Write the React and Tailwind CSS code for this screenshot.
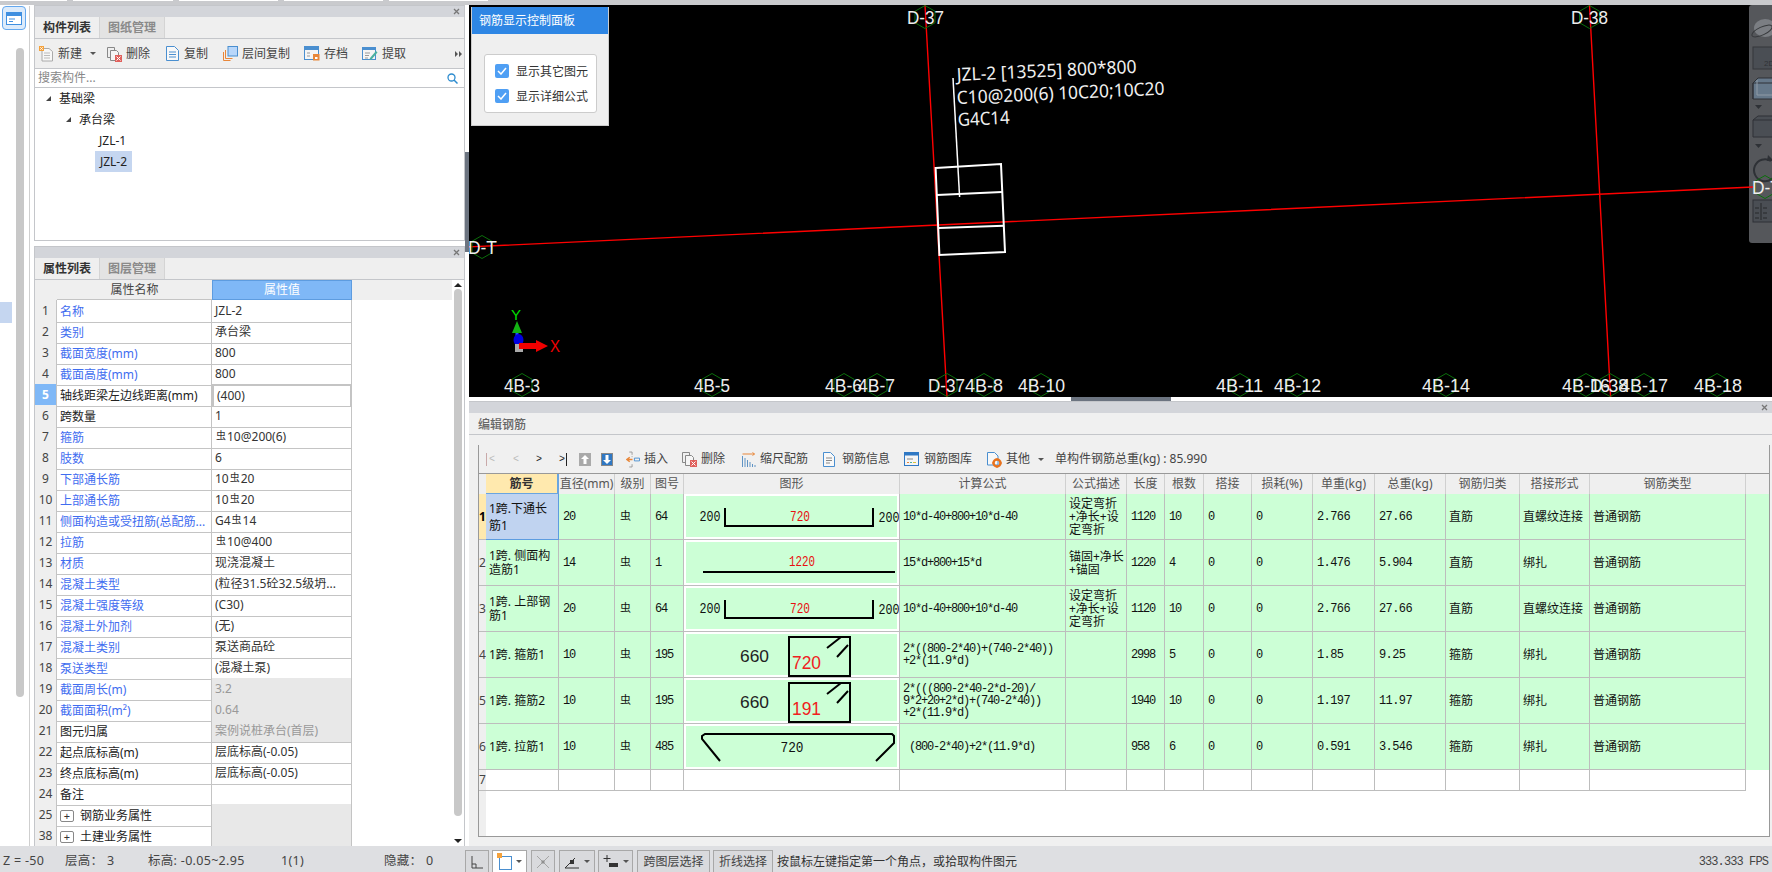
import React from "react"

const SANS = "font-['Noto_Sans','Noto_Sans_CJK_SC',sans-serif]"
const MONO = "font-['Liberation_Mono','Noto_Sans_CJK_SC',monospace]"
const BAR_COLS = "grid grid-cols-[7px_73px_56px_36px_33px_216px_166px_61px_38px_39px_48px_61px_62px_71px_74px_70px_156px]"

const props = [
  ["1", "名称", "JZL-2", "b"],
  ["2", "类别", "承台梁", "b"],
  ["3", "截面宽度(mm)", "800", "b"],
  ["4", "截面高度(mm)", "800", "b"],
  ["5", "轴线距梁左边线距离(mm)", "(400)", "active"],
  ["6", "跨数量", "1", ""],
  ["7", "箍筋", ["", "10@200(6)"], "b"],
  ["8", "肢数", "6", "b"],
  ["9", "下部通长筋", ["10", "20"], "b"],
  ["10", "上部通长筋", ["10", "20"], "b"],
  ["11", "侧面构造或受扭筋(总配筋...", ["G4", "14"], "b"],
  ["12", "拉筋", ["", "10@400"], "b"],
  ["13", "材质", "现浇混凝土", "b"],
  ["14", "混凝土类型", "(粒径31.5砼32.5级坍...", "b"],
  ["15", "混凝土强度等级", "(C30)", "b"],
  ["16", "混凝土外加剂", "(无)", "b"],
  ["17", "混凝土类别", "泵送商品砼", "b"],
  ["18", "泵送类型", "(混凝土泵)", "b"],
  ["19", "截面周长(m)", "3.2", "b dis"],
  ["20", "截面面积(m²)", "0.64", "b dis"],
  ["21", "图元归属", "案例说桩承台(首层)", "dis"],
  ["22", "起点底标高(m)", "层底标高(-0.05)", ""],
  ["23", "终点底标高(m)", "层底标高(-0.05)", ""],
  ["24", "备注", "", ""],
  ["25", "钢筋业务属性", "", "group"],
  ["38", "土建业务属性", "", "group"],
]

const bars = [
  { n: "1", name: ["1跨.下通长", "筋1"], d: "20", no: "64", fig: "hook", formula: ["10*d-40+800+10*d-40"], desc: ["设定弯折", "+净长+设", "定弯折"], len: "1120", cnt: "10", unit: "2.766", tot: "27.66", cat: "直筋", lap: "直螺纹连接" },
  { n: "2", name: ["1跨. 侧面构", "造筋1"], d: "14", no: "1", fig: "line", formula: ["15*d+800+15*d"], desc: ["锚固+净长", "+锚固"], len: "1220", cnt: "4", unit: "1.476", tot: "5.904", cat: "直筋", lap: "绑扎" },
  { n: "3", name: ["1跨. 上部钢", "筋1"], d: "20", no: "64", fig: "hook", formula: ["10*d-40+800+10*d-40"], desc: ["设定弯折", "+净长+设", "定弯折"], len: "1120", cnt: "10", unit: "2.766", tot: "27.66", cat: "直筋", lap: "直螺纹连接" },
  { n: "4", name: ["1跨. 箍筋1"], d: "10", no: "195", fig: "s720", formula: ["2*((800-2*40)+(740-2*40))", "+2*(11.9*d)"], desc: [], len: "2998", cnt: "5", unit: "1.85", tot: "9.25", cat: "箍筋", lap: "绑扎" },
  { n: "5", name: ["1跨. 箍筋2"], d: "10", no: "195", fig: "s191", formula: ["2*(((800-2*40-2*d-20)/", "9*2+20+2*d)+(740-2*40))", "+2*(11.9*d)"], desc: [], len: "1940", cnt: "10", unit: "1.197", tot: "11.97", cat: "箍筋", lap: "绑扎" },
  { n: "6", name: ["1跨. 拉筋1"], d: "10", no: "485", fig: "tie", formula: [" (800-2*40)+2*(11.9*d)"], desc: [], len: "958", cnt: "6", unit: "0.591", tot: "3.546", cat: "箍筋", lap: "绑扎" },
]

const barHeads = ["直径(mm)", "级别", "图号", "图形", "计算公式", "公式描述", "长度", "根数", "搭接", "损耗(%)", "单重(kg)", "总重(kg)", "钢筋归类", "搭接形式", "钢筋类型"]

const topLabels = [
  ["D-37", 925, 17],
  ["D-38", 1589.5, 17],
  ["D-T", 482, 247],
  ["D-T2", 1765, 187],
]
const bottomLabels = [
  ["4B-3", 522, 504, 36], ["4B-5", 712, 694, 36], ["4B-6", 844, 825, 37], ["4B-7", 877, 858, 37],
  ["D-37", 947, 928, 37], ["4B-8", 984, 965, 38], ["4B-10", 1041, 1018, 47], ["4B-11", 1240, 1216, 47],
  ["4B-12", 1297, 1274, 47], ["4B-14", 1446, 1422, 48], ["4B-16", 1586, 1562, 48], ["D-38", 1610, 1590, 38],
  ["4B-17", 1644, 1620, 48], ["4B-18", 1717, 1694, 48],
]

function hex(cx, cy) {
  const rx = 10, ry = 11.5
  return `${cx},${cy - ry} ${cx + rx},${cy - ry / 2} ${cx + rx},${cy + ry / 2} ${cx},${cy + ry} ${cx - rx},${cy + ry / 2} ${cx - rx},${cy - ry / 2}`
}

function Caret({ className = "" }) {
  return <span className={`inline-block h-0 w-0 border-x-[3px] border-t-[3px] border-x-transparent border-t-[#555] ${className}`} />
}

function NewIcon() {
  return (
    <svg width="15" height="16" viewBox="0 0 15 16">
      <path d="M3 2.5h7l3.5 3v9.5h-10.5z" fill="#f7f7f7" stroke="#aaa" />
      <path d="M5 7h6M5 9.5h6M5 12h6" stroke="#bbb" />
      <rect x="0" y="0" width="5" height="5" fill="#f5a23c" />
      <path d="M1 1l3 3M4 1l-3 3" stroke="#fff" strokeWidth=".7" />
    </svg>
  )
}
function DeleteIcon() {
  return (
    <svg width="15" height="16" viewBox="0 0 15 16">
      <path d="M.5 1.5h7v10h-7z" fill="none" stroke="#888" />
      <path d="M3.5 4.5h6l2 2v8h-8z" fill="#f5f5f5" stroke="#888" />
      <rect x="8" y="9" width="7" height="7" fill="#e0605c" />
      <path d="M9.5 10.5l4 4M13.5 10.5l-4 4" stroke="#fff" />
    </svg>
  )
}
function CopyIcon() {
  return (
    <svg width="13" height="15" viewBox="0 0 13 15" className="mr-[1px]">
      <path d="M.5.5h8l4 4v10h-12z" fill="#f8f8f8" stroke="#4a8fd0" />
      <path d="M3 6h7M3 8.5h7M3 11h7" stroke="#4a8fd0" />
    </svg>
  )
}
function FloorCopyIcon() {
  return (
    <svg width="15" height="15" viewBox="0 0 15 15">
      <path d="M.5 6v8.500h7M2.500 4v8.500h7" fill="none" stroke="#e8873a" />
      <rect x="5" y=".5" width="9.500" height="9.500" fill="#b9d7fa" stroke="#4a8fd0" />
    </svg>
  )
}
function SaveIcon() {
  return (
    <svg width="16" height="15" viewBox="0 0 16 15">
      <rect x=".5" y=".5" width="14" height="13" fill="#f5f5f5" stroke="#4a8fd0" />
      <rect x="0" y="0" width="15" height="4" fill="#4a8fd0" />
      <path d="M3 7h3M3 10h3" stroke="#999" />
      <rect x="9" y="8" width="6.500" height="6.500" fill="#e8873a" />
      <rect x="11" y="11" width="2.500" height="2" fill="#fff" />
    </svg>
  )
}
function ExtractIcon() {
  return (
    <svg width="16" height="15" viewBox="0 0 16 15">
      <rect x=".5" y="1.500" width="13" height="12" fill="#f5f5f5" stroke="#4a8fd0" />
      <rect x="0" y="1" width="14" height="3" fill="#4a8fd0" />
      <path d="M3 7h5M3 9.500h4M3 12h3" stroke="#999" />
      <path d="M8 12l6-7 1.500 1.500-6 7-2 .5z" fill="#4ab0a0" />
    </svg>
  )
}
function InsertIcon() {
  return (
    <svg width="14" height="17" viewBox="0 0 15 17">
      <path d="M3.500.5h3v3M6.500 13.500v3h-3M6.500 6v-1" fill="none" stroke="#999" />
      <path d="M7 8.500H2M4 6l-3 2.500L4 11" fill="none" stroke="#e8873a" strokeWidth="1.500" />
      <path d="M9 7h5.500v3H9z" fill="none" stroke="#4a8fd0" />
    </svg>
  )
}
function ScaleIcon() {
  return (
    <svg width="14" height="15" viewBox="0 0 14 15">
      <path d="M.5 2h12M10.500.5l2 1.500-2 1.500" fill="none" stroke="#e8873a" />
      <path d="M.5 4v11M3 6v9M5.500 8v7M8 10v5M10.500 12v3M13 13v2" stroke="#5f93c4" />
    </svg>
  )
}
function InfoIcon() {
  return (
    <svg width="12" height="15" viewBox="0 0 12 15" className="mr-[3px]">
      <path d="M.5.5h7l4 4v10H.5z" fill="#f8f8f8" stroke="#4a8fd0" />
      <path d="M3 6h6M3 8.500h6M3 11h4" stroke="#888" />
    </svg>
  )
}
function LibraryIcon() {
  return (
    <svg width="15" height="14" viewBox="0 0 15 14" className="mr-[1px]">
      <rect x=".5" y=".5" width="14" height="13" fill="#f5f5f5" stroke="#2f78c4" />
      <rect x="0" y="0" width="15" height="3.500" fill="#2f78c4" />
      <path d="M3 7h6" stroke="#888" />
      <path d="M3 10.500h2" stroke="#e8873a" /><path d="M6 10.500h2" stroke="#4ab0a0" /><path d="M9 10.500h3" stroke="#d9c23c" />
    </svg>
  )
}
function OtherIcon() {
  return (
    <svg width="15" height="17" viewBox="0 0 15 17">
      <path d="M.5 1.500h7l3.500 3.500v9H.5z" fill="#f8f8f8" stroke="#4a8fd0" />
      <circle cx="10" cy="12" r="3.500" fill="none" stroke="#e8731e" strokeWidth="2.400" />
      <path d="M10 7v1.500M10 15.500v1.500M5 12h1.500M13.500 12H15" stroke="#e8731e" />
    </svg>
  )
}

function ToolItem({ icon, label, className = "" }) {
  return (
    <div className={`flex items-center gap-[4px] ${className}`}>
      {icon}
      <span className="whitespace-nowrap text-[12px] text-[#444]">{label}</span>
    </div>
  )
}

function TitleBar() {
  return (
    <div className="flex h-[12px] shrink-0 items-center justify-end border-t border-[#c4c6ca] bg-[#d3d5da] pr-[4px]">
      <svg width="7" height="7" viewBox="0 0 7 7"><path d="M1 1l5 5M6 1l-5 5" stroke="#777" strokeWidth="1.300" /></svg>
    </div>
  )
}

function PanelTabs({ active, other }) {
  return (
    <div className="flex h-[22px] shrink-0 border-b border-[#c4c6ca] bg-[#efefef] text-[12px]">
      <div className="flex w-[65px] items-center justify-center border-r border-[#d4d4d4] font-semibold text-[#333]">{active}</div>
      <div className="flex w-[65px] items-center justify-center border-r border-[#d4d4d4] bg-[#e3e3e3] font-semibold text-[#8a8a8a]">{other}</div>
    </div>
  )
}

function Rebar() {
  return <span className="relative top-[-2px] mx-[1px] text-[10px] leading-none">虫</span>
}

function PropRow({ row }) {
  const [num, name, value, flags] = row
  const active = flags === "active"
  const group = flags === "group"
  const dis = flags.includes("dis")
  const blue = flags.includes("b")
  return (
    <div className="grid h-[21px] grid-cols-[22px_155px_140px] text-[12px] leading-[22px]">
      <div className={`border-r border-b border-[#c4c4c4] text-center ${active ? "bg-[#7fb8f7] font-bold text-white" : "bg-[#efefef] text-[#444]"}`}>{num}</div>
      <div className={`flex items-center overflow-hidden border-r border-b border-[#c4c4c4] pt-[1px] pl-[3px] whitespace-nowrap ${blue ? "text-[#3f6df0]" : "text-[#222]"}`}>
        {group && <span className="mr-[6px] flex h-[12px] w-[14px] items-center justify-center rounded-[2px] border border-[#888] text-[11px] leading-none text-[#333]">+</span>}
        {name}
      </div>
      <div className={`overflow-hidden border-b border-[#c4c4c4] pl-[3px] whitespace-nowrap ${active ? "border-2 border-[#808080] bg-white pl-[2px] leading-[19px] text-[#333]" : "border-r"} ${dis || group ? "bg-[#e8e8e8]" : ""} ${dis ? "text-[#999]" : "text-[#333]"}`}>
        {Array.isArray(value) ? <>{value[0]}<Rebar />{value[1]}</> : value}
      </div>
    </div>
  )
}

function Figure({ type }) {
  const mono = "Liberation Mono, monospace"
  const sans = "Liberation Sans, sans-serif"
  const text = (x, y, t, w, fill = "#111") => (
    <text x={x - w / 2} y={y} fill={fill} fontSize="14" fontFamily={mono} dominantBaseline="central" textLength={w} lengthAdjust="spacingAndGlyphs">{t}</text>
  )
  return (
    <svg width="216" height="45" viewBox="0 0 216 45" className="block">
      {type === "hook" && <>
        {text(26, 23, "200", 21)}
        <path d="M41 14v18h148v-18" fill="none" stroke="#000" strokeWidth="2" />
        {text(116, 23, "720", 20, "#e81010")}
        {text(205, 24, "200", 21)}
      </>}
      {type === "line" && <>
        {text(118, 22, "1220", 26, "#e81010")}
        <path d="M19 32h192" stroke="#000" strokeWidth="2" />
      </>}
      {(type === "s720" || type === "s191") && <>
        <text x="56" y="24" fill="#222" fontSize="17" fontFamily={sans} dominantBaseline="central" textLength="29" lengthAdjust="spacingAndGlyphs">660</text>
        <rect x="105" y="5" width="61" height="39" fill="none" stroke="#000" strokeWidth="2" />
        <path d="M143 16l14-11M153 25l11-12" stroke="#000" strokeWidth="2" />
        <text x="108" y="30" fill="#f02020" fontSize="19" fontFamily={sans} dominantBaseline="central" textLength="29" lengthAdjust="spacingAndGlyphs">{type === "s720" ? "720" : "191"}</text>
      </>}
      {type === "tie" && <>
        <path d="M36 37L18 15v-3l3-2h187l2 2v7L192 37" fill="none" stroke="#000" strokeWidth="2" />
        {text(108, 24, "720", 23)}
      </>}
    </svg>
  )
}

function Num({ children }) {
  return <div className={`flex items-center overflow-hidden border-r border-b border-[#bdbdbd] pl-[4px] ${MONO} text-[12px] tracking-[-1.2px] text-[#111]`}>{children}</div>
}
function Cjk({ children }) {
  return <div className="flex items-center overflow-hidden border-r border-b border-[#bdbdbd] pl-[3px] text-[12px] whitespace-nowrap text-[#111]">{children}</div>
}

function BarRow({ row, first }) {
  return (
    <div className={`${BAR_COLS} h-[46px] bg-[#ccffd6]`}>
      <div className={`flex items-center justify-center overflow-hidden border-b border-[#bdbdbd] text-[12px] ${first ? "bg-[#ffe9ae] font-bold text-black" : "bg-[#efefef] text-[#444]"}`}>{row.n}</div>
      <div className={`flex flex-col justify-center overflow-hidden border-r border-b pl-[3px] text-[12px] whitespace-nowrap text-[#111] ${first ? "border-[#5d9ce0] bg-[#c0d3f0] leading-[17px]" : "border-[#bdbdbd] leading-[14px]"}`}>
        {row.name.map(l => <div key={l}>{l}</div>)}
      </div>
      <Num>{row.d}</Num>
      <div className="flex items-center border-r border-b border-[#bdbdbd] pl-[5px] text-[11px] text-[#111]">虫</div>
      <Num>{row.no}</Num>
      <div className="border-r border-b border-[#bdbdbd]">
        <div className="h-full border-2 border-white"><div className="-mx-[2px] -my-[2px]"><Figure type={row.fig} /></div></div>
      </div>
      <div className={`flex flex-col justify-center overflow-hidden border-r border-b border-[#bdbdbd] pl-[3px] ${MONO} text-[12px] leading-[12px] tracking-[-1.2px] whitespace-pre text-[#111]`}>
        {row.formula.map(l => <div key={l}>{l}</div>)}
      </div>
      <div className="flex flex-col justify-center overflow-hidden border-r border-b border-[#bdbdbd] pl-[3px] text-[12px] leading-[13px] whitespace-nowrap text-[#111]">
        {row.desc.map(l => <div key={l}>{l}</div>)}
      </div>
      <Num>{row.len}</Num>
      <Num>{row.cnt}</Num>
      <Num>0</Num>
      <Num>0</Num>
      <Num><span className="tracking-[-0.6px]">{row.unit}</span></Num>
      <Num><span className="tracking-[-0.6px]">{row.tot}</span></Num>
      <Cjk>{row.cat}</Cjk>
      <Cjk>{row.lap}</Cjk>
      <Cjk>普通钢筋</Cjk>
    </div>
  )
}

function Viewport() {
  const label = (t, x, y, w, key) => (
    <text key={key} x={x} y={y} fill="#eee" fontSize="19" fontFamily="Liberation Sans, sans-serif" textLength={w} lengthAdjust="spacingAndGlyphs">{t}</text>
  )
  return (
    <svg viewBox="469 5 1303 392" className="absolute inset-0 h-full w-full">
      <path d="M925 5L947 397M1589.500 5L1610.600 397M467 247L1753 187" stroke="#ff0000" strokeWidth="1.400" fill="none" />
      <g fill="none" stroke="#0b6e0b">
        {topLabels.map(l => <polygon key={l[0]} points={hex(l[1], l[2])} />)}
        {bottomLabels.map(l => <polygon key={l[0]} points={hex(l[1], 385)} />)}
      </g>
      {label("D-37", 907, 24, 37, "a")}
      {label("D-38", 1571, 24, 37, "b")}
      {label("D-T", 468, 254, 29, "c")}
      {label("D-T", 1752, 194, 29, "d")}
      {bottomLabels.map(l => label(l[0], l[2], 392, l[3], l[0]))}

      <g fill="none" stroke="#fff" strokeWidth="2">
        <path d="M935.600 168L1001 164L1005 252L939.400 255Z" />
        <path d="M937 195L1002 192M938.500 228L1004 225.700" />
        <path d="M953 78L959.600 197" strokeWidth="1.500" />
      </g>
      <g fill="#f0f0f0" fontSize="18" fontFamily="Noto Sans, sans-serif">
        <text x="957" y="81" transform="rotate(-2.600 957 81)" textLength="180" lengthAdjust="spacingAndGlyphs">JZL-2 [13525] 800*800</text>
        <text x="957" y="104" transform="rotate(-2.600 957 104)" textLength="208" lengthAdjust="spacingAndGlyphs">C10@200(6) 10C20;10C20</text>
        <text x="958" y="126" transform="rotate(-2.600 958 126)" textLength="52" lengthAdjust="spacingAndGlyphs">G4C14</text>
      </g>

      <text x="511" y="320" fill="#00e000" fontSize="15" fontFamily="Liberation Sans, sans-serif">Y</text>
      <path d="M517 321l5 12h-10z" fill="#13b313" />
      <path d="M517 333v8" stroke="#2050ff" strokeWidth="3" />
      <ellipse cx="518.500" cy="340" rx="5" ry="6" fill="#0000e0" />
      <rect x="515" y="344" width="8" height="8" fill="#aaa" />
      <path d="M519 343h17v-3l12 6-12 6v-3h-17z" fill="#f00000" />
      <text x="550" y="352" fill="#f00000" fontSize="16" fontFamily="Liberation Sans, sans-serif" textLength="10" lengthAdjust="spacingAndGlyphs">X</text>
    </svg>
  )
}

function FloatingPanel() {
  return (
    <div className="absolute top-[2px] left-[2px] h-[119px] w-[138px] border-x border-b border-[#ccc] bg-[#efefef]">
      <div className="flex h-[27px] items-center bg-[#2e86e4] pl-[7px] text-[12px] text-white">钢筋显示控制面板</div>
      <div className="mx-[12px] mt-[20px] flex h-[59px] w-[113px] flex-col justify-center gap-[9px] rounded-[3px] border border-[#ccc] bg-white pl-[10px]">
        {["显示其它图元", "显示详细公式"].map(t => (
          <div key={t} className="flex items-center gap-[7px] text-[12px] leading-[14px] text-[#333]">
            <span className="flex h-[14px] w-[14px] items-center justify-center rounded-[2px] bg-[#4f9ff4]">
              <svg width="10" height="8" viewBox="0 0 10 8"><path d="M1 4l3 3 5-6" fill="none" stroke="#fff" strokeWidth="1.500" /></svg>
            </span>
            <span className="pt-[2px]">{t}</span>
          </div>
        ))}
      </div>
    </div>
  )
}

function SideTools() {
  return (
    <div className="absolute top-0 right-0 h-[238px] w-[23px] rounded-l-[3px] bg-[#55575b]">
      <svg width="23" height="238" viewBox="0 0 23 238" className="block">
        <ellipse cx="16" cy="23" rx="11" ry="9" fill="#7b7e83" />
        <ellipse cx="13" cy="26" rx="11" ry="4" fill="none" stroke="#36383b" transform="rotate(-25 13 26)" />
        <rect x="4" y="42" width="24" height="22" fill="#4a4e54" stroke="#34373b" />
        <text x="15" y="61" fill="#2f3236" fontSize="8" fontFamily="Liberation Sans, sans-serif">2D</text>
        <path d="M4 94V78l5-5h19M4 78h24v16H4z" fill="#66788a" stroke="#2e3136" />
        <path d="M8 90V75M8 90H28" stroke="#8f9aa6" fill="none" />
        <path d="M6 100h7l-3.500 4z" fill="#2e3136" />
        <path d="M4 132V115l5-4h19v21zM4 115h24" fill="#4a4e54" stroke="#2e3136" />
        <path d="M6 139h7l-3.500 4z" fill="#2e3136" />
        <path d="M22 156a11 11 0 1 0 5 10" fill="none" stroke="#2e3136" strokeWidth="2" />
        <path d="M19 150l6 6h-7z" fill="#2e3136" />
        <rect x="4" y="195" width="24" height="22" fill="#4a4e54" stroke="#2e3136" />
        <path d="M6 203h4M6 208h4M6 213h4M14 203h4M14 208h4M14 213h4M12 198v17" stroke="#26282b" />
      </svg>
    </div>
  )
}

function StatusButton({ className = "", children }) {
  return <div className={`flex h-[22px] items-center justify-center border border-b-0 border-[#a8a8a8] bg-[#d9dadd] ${className}`}>{children}</div>
}

function StatusBar() {
  return (
    <div className="flex h-[26px] shrink-0 items-end bg-[#dedfe2] text-[12px] text-[#444]">
      <div className="flex h-[26px] w-[465px] items-center pt-[5px] pl-[3px] text-[12.500px] tracking-[0.3px] whitespace-nowrap">
        <span className="w-[62px]">Z = -50</span>
        <span className="w-[83px]">层高： 3</span>
        <span className="w-[133px]">标高: -0.05~2.95</span>
        <span className="w-[103px]">1(1)</span>
        <span className="w-[81px]">隐藏： 0</span>
      </div>
      <div className="flex items-end gap-[3px]">
        <StatusButton className="w-[24px]">
          <svg width="14" height="14" viewBox="0 0 14 14"><path d="M2 1v12h11M2 9h4v4" fill="none" stroke="#444" /></svg>
        </StatusButton>
        <StatusButton className="w-[35px] justify-start gap-[4px] border-[#3d9bf0] bg-white pl-[4px]">
          <svg width="15" height="17" viewBox="0 0 15 17"><rect x="2.500" y="3.500" width="12" height="13" fill="none" stroke="#4a8fd0" /><rect x="0" y="0" width="5" height="5" fill="#f5a23c" /></svg>
          <Caret />
        </StatusButton>
        <StatusButton className="ml-[1px] w-[24px]">
          <svg width="14" height="14" viewBox="0 0 14 14"><path d="M1 1l12 12M13 1L1 13" stroke="#a5a5a5" /><rect x="5.500" y="5.500" width="3" height="3" fill="#8f8f8f" /></svg>
        </StatusButton>
        <StatusButton className="ml-[1px] w-[36px] gap-[4px]">
          <svg width="16" height="14" viewBox="0 0 16 14"><path d="M1 13L11 3M1 13h14" stroke="#333" fill="none" /><rect x="6" y="5" width="4" height="4" fill="#333" /></svg>
          <Caret />
        </StatusButton>
        <StatusButton className="w-[35px] gap-[4px]">
          <svg width="16" height="14" viewBox="0 0 16 14"><path d="M4 0v7M.5 3.500h7" stroke="#333" /><rect x="6" y="8" width="9" height="4" fill="#333" /></svg>
          <Caret />
        </StatusButton>
        <StatusButton className="ml-[1px] w-[73px]">跨图层选择</StatusButton>
        <StatusButton className="w-[60px]">折线选择</StatusButton>
      </div>
      <div className="flex h-[26px] items-center pt-[5px] pl-[4px] whitespace-nowrap text-[#333]">按鼠标左键指定第一个角点，或拾取构件图元</div>
      <div className={`ml-auto flex h-[26px] items-center pt-[5px] pr-[4px] ${MONO} text-[12px] tracking-[-0.9px] whitespace-pre text-[#444]`}>333.333 FPS</div>
    </div>
  )
}

export default function App() {
  return (
    <div className={`flex h-[872px] w-[1772px] flex-col overflow-hidden bg-white ${SANS}`}>
      {/* top strip */}
      <div className="flex h-[5px] shrink-0 gap-[6px] bg-[#c9cacd]">
        {["w-[67px]", "w-[100px]", "w-[99px]", "w-[99px]", "w-[99px]"].map((w, i) => (
          <div key={i} className={`h-[1px] bg-white ${w}`} />
        ))}
      </div>

      <div className="flex h-[841px] shrink-0">
        {/* left rail */}
        <div className="w-[34px] shrink-0">
          <div className="h-full w-[30px] border-r border-[#cfcfcf]">
            <div className="mt-[1px] ml-[2px] flex h-[24px] w-[24px] items-center justify-center rounded-[4px] border border-[#64a8ee] bg-[#dcebfb]">
              <svg width="16" height="13" viewBox="0 0 16 13">
                <rect x="0" y="0" width="16" height="13" fill="#3f8fe0" />
                <rect x="1" y="4" width="14" height="8" fill="#fff" />
                <path d="M3 7h6M3 9.500h4" stroke="#3f8fe0" />
              </svg>
            </div>
            <div className="mt-[18px] flex">
              <div className="w-[16px]"><div className="mt-[254px] h-[21px] w-[12px] bg-[#c5d6f0]" /></div>
              <div className="h-[649px] w-[8px] rounded-[4px] bg-[#c8c8c8]" />
            </div>
          </div>
        </div>

        {/* left panels */}
        <div className="flex w-[431px] shrink-0 flex-col gap-[5px] text-[12px]">
          <div className="flex h-[236px] flex-col border-x border-b border-[#c4c6ca]">
            <TitleBar />
            <PanelTabs active="构件列表" other="图纸管理" />
            <div className="flex h-[30px] shrink-0 items-center border-b border-[#c4c6ca] bg-[#efefef] pl-[4px]">
              <ToolItem icon={<NewIcon />} label="新建" className="mr-[8px]" />
              <Caret className="mr-[11px]" />
              <ToolItem icon={<DeleteIcon />} label="删除" className="mr-[16px]" />
              <ToolItem icon={<CopyIcon />} label="复制" className="mr-[15px]" />
              <ToolItem icon={<FloorCopyIcon />} label="层间复制" className="mr-[14px]" />
              <ToolItem icon={<SaveIcon />} label="存档" className="mr-[14px]" />
              <ToolItem icon={<ExtractIcon />} label="提取" />
              <svg width="8" height="6" viewBox="0 0 8 6" className="mr-[1px] ml-auto"><path d="M0 0l3 3-3 3zM4 0l3 3-3 3z" fill="#555" /></svg>
            </div>
            <div className="flex h-[19px] shrink-0 items-center justify-between border-b border-[#c4c6ca] pr-[6px] pl-[3px] text-[#888]">
              <span>搜索构件...</span>
              <svg width="11" height="11" viewBox="0 0 11 11"><circle cx="4.500" cy="4.500" r="3.500" fill="none" stroke="#2d8ccf" strokeWidth="1.300" /><path d="M7 7l3.500 3.500" stroke="#2d8ccf" strokeWidth="1.500" /></svg>
            </div>
            <div className="flex-1 text-[#222]">
              <div className="flex h-[21px] items-center pl-[11px]"><span className="mr-[8px] h-0 w-0 border-b-[5px] border-l-[5px] border-b-[#444] border-l-transparent" />基础梁</div>
              <div className="flex h-[21px] items-center pl-[31px]"><span className="mr-[8px] h-0 w-0 border-b-[5px] border-l-[5px] border-b-[#444] border-l-transparent" />承台梁</div>
              <div className="flex h-[21px] items-center pl-[64px]">JZL-1</div>
              <div className="ml-[60px] flex h-[21px] w-[37px] items-center justify-center bg-[#c5d6f0]">JZL-2</div>
            </div>
          </div>

          <div className="flex h-[600px] flex-col border-x border-[#c4c6ca]">
            <TitleBar />
            <PanelTabs active="属性列表" other="图层管理" />
            <div className="flex flex-1">
              <div className="flex-1">
                <div className="flex h-[20px] bg-[#efefef] pl-[22px] leading-[20px]">
                  <div className="w-[155px] border-b border-[#c4c4c4] text-center text-[#444]">属性名称</div>
                  <div className="w-[140px] border border-[#5d9ce0] bg-[#7fb8f7] text-center leading-[18px] text-white">属性值</div>
                </div>
                {props.map(r => <PropRow key={r[0]} row={r} />)}
              </div>
              <div className="flex w-[12px] shrink-0 flex-col items-center pr-[1px]">
                <span className="mt-[3px] h-0 w-0 border-x-[4px] border-b-[4px] border-x-transparent border-b-[#222]" />
                <div className="mt-[2px] h-[527px] w-[8px] rounded-[4px] bg-[#c8c8c8]" />
                <span className="mt-auto mb-[3px] h-0 w-0 border-x-[4px] border-t-[4px] border-x-transparent border-t-[#222]" />
              </div>
            </div>
          </div>
        </div>

        {/* splitter */}
        <div className="flex w-[4px] shrink-0 flex-col bg-white">
          <div className="mt-[147px] h-[100px] bg-[#6c7480]" />
        </div>

        {/* right column */}
        <div className="flex min-w-0 flex-1 flex-col">
          <div className="relative h-[392px] shrink-0 overflow-hidden bg-black">
            <FloatingPanel />
            <SideTools />
            <Viewport />
          </div>
          <div className="flex h-[4px] shrink-0 justify-center bg-white">
            <div className="h-full w-[100px] bg-[#6c7480]" />
          </div>

          <div className="flex flex-1 flex-col bg-[#f0f0f0]">
            <TitleBar />
            <div className="flex h-[22px] shrink-0 items-center border-b border-[#c4c6ca] pt-[2px] pl-[9px] text-[12px] font-medium text-[#666]">编辑钢筋</div>

            <div className="mt-[10px] mr-[2px] mb-[9px] ml-[9px] flex flex-1 flex-col border-r border-b border-l border-[#999] bg-white">
              <div className="flex h-[29px] shrink-0 items-center border-b border-[#999] bg-[#f0f0f0] text-[12px]">
                <span className="ml-[7px] flex w-[26px] items-center gap-[2px] text-[#bbb]"><i className="h-[13px] w-[1px] bg-[#c9a9a9]" /><span className={`${MONO} text-[10px]`}>&lt;</span></span>
                <span className={`w-[24px] pl-[1px] ${MONO} text-[10px] text-[#bbb]`}>&lt;</span>
                <span className={`w-[23px] ${MONO} text-[10px] text-[#222]`}>&gt;</span>
                <span className="flex w-[20px] items-center gap-[1px]"><span className={`${MONO} text-[10px] text-[#222]`}>&gt;</span><i className="h-[13px] w-[1px] bg-[#222]" /></span>
                <span className="flex h-[13px] w-[12px] items-center justify-center border border-[#aaa] bg-[#a9a9a9]">
                  <svg width="8" height="9" viewBox="0 0 8 9"><path d="M4 0l4 4H5.500v5h-3V4H0z" fill="#fff" /></svg>
                </span>
                <span className="ml-[10px] flex h-[13px] w-[12px] items-center justify-center border border-[#888] bg-[#2f78c4]">
                  <svg width="8" height="9" viewBox="0 0 8 9"><path d="M4 9L0 5h2.500V0h3v5H8z" fill="#fff" /></svg>
                </span>
                <ToolItem icon={<InsertIcon />} label="插入" className="ml-[13px]" />
                <ToolItem icon={<DeleteIcon />} label="删除" className="ml-[14px]" />
                <ToolItem icon={<ScaleIcon />} label="缩尺配筋" className="ml-[17px]" />
                <ToolItem icon={<InfoIcon />} label="钢筋信息" className="ml-[15px]" />
                <ToolItem icon={<LibraryIcon />} label="钢筋图库" className="ml-[14px]" />
                <ToolItem icon={<OtherIcon />} label="其他" className="ml-[15px]" />
                <Caret className="ml-[8px]" />
                <span className="ml-[11px] whitespace-nowrap text-[#444]">单构件钢筋总重(kg) : 85.990</span>
              </div>

              <div className="flex flex-1 flex-col">
                <div className="flex h-[20px] shrink-0 bg-[#efefef] text-[12px] leading-[19px] text-[#555]">
                  <div className={`${BAR_COLS} flex-none`}>
                    <div className="border-b border-[#bdbdbd]" />
                    <div className="border-r-2 border-b-2 border-[#6aa5e0] bg-[#ffe9ae] text-center font-bold text-[#333]">筋号</div>
                    {barHeads.map(h => <div key={h} className="overflow-hidden border-r border-b border-[#d0d0d0] text-center whitespace-nowrap">{h}</div>)}
                  </div>
                </div>
                {bars.map((r, i) => <BarRow key={r.n} row={r} first={i === 0} />)}
                <div className={`${BAR_COLS} h-[21px]`}>
                  <div className="flex items-center justify-center overflow-hidden border-b border-[#bdbdbd] bg-[#efefef] text-[12px] text-[#444]">7</div>
                  {Array.from({ length: 16 }).map((_, i) => <div key={i} className="border-r border-b border-[#bdbdbd]" />)}
                </div>
                <div className="w-[7px] flex-1 bg-[#efefef]" />
              </div>
            </div>
          </div>
        </div>
      </div>

      <StatusBar />
    </div>
  )
}
